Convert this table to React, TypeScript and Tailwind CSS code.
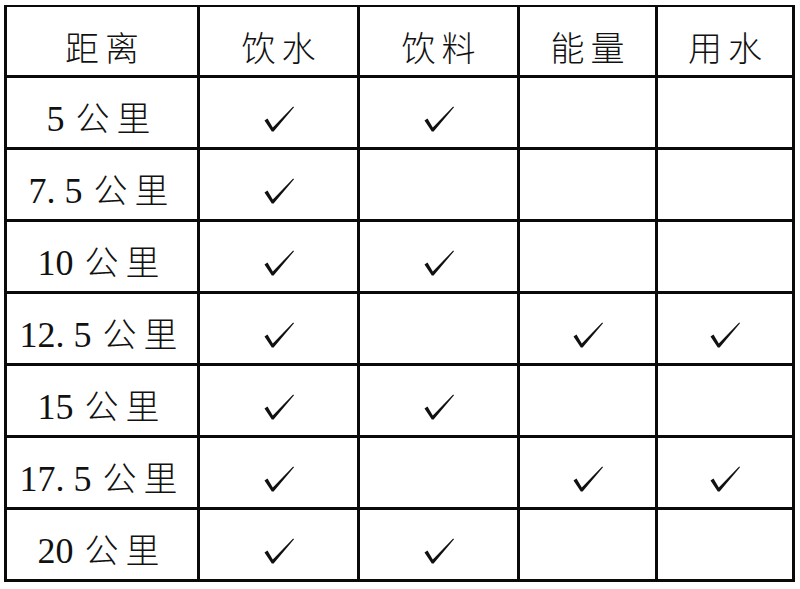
import React from 'react'

type Row = {
  num: string
  marks: boolean[] // 饮水, 饮料, 能量, 用水
}

const headers = ['距离', '饮水', '饮料', '能量', '用水']

const rows: Row[] = [
  { num: '5', marks: [true, true, false, false] },
  { num: '7. 5', marks: [true, false, false, false] },
  { num: '10', marks: [true, true, false, false] },
  { num: '12. 5', marks: [true, false, true, true] },
  { num: '15', marks: [true, true, false, false] },
  { num: '17. 5', marks: [true, false, true, true] },
  { num: '20', marks: [true, true, false, false] },
]

const cjk = "font-['Noto_Sans_CJK_SC',sans-serif] font-light"

function Check() {
  return (
    <svg width="30" height="26" viewBox="0 0 30 26" className="block">
      <path
        d="M0.5 14.5 L3.5 12.5 L8.8 21.5 L29.2 0.5 L30 1.2 L9.6 25.5 L7.8 25.5 Z"
        fill="#111"
      />
    </svg>
  )
}

function Cell({ children }: { children?: React.ReactNode }) {
  return (
    <div className="bg-white flex items-center justify-center pt-3">
      {children}
    </div>
  )
}

export default function App() {
  return (
    <div className="w-[800px] h-[589px] bg-white pt-[5px] pl-[4px]">
      <div className="inline-grid grid-cols-[190px_157px_157px_135px_134px] grid-rows-[68px_repeat(7,69px)] gap-[3px] bg-[#0a0a0a] pt-[2px] px-[3px] pb-[3px]">
        {headers.map((h) => (
          <Cell key={h}>
            <span className={`${cjk} text-[34px] leading-none tracking-[6px] pl-[6px] text-[#111]`}>
              {h}
            </span>
          </Cell>
        ))}
        {rows.map((r) => (
          <React.Fragment key={r.num}>
            <Cell>
              <span className="whitespace-pre text-[#111] leading-none">
                <span className="font-['Liberation_Serif',serif] text-[36px]">{r.num} </span>
                <span className={`${cjk} text-[34px] tracking-[7px] pl-[2px]`}>公里</span>
              </span>
            </Cell>
            {r.marks.map((m, i) => (
              <Cell key={i}>{m && <Check />}</Cell>
            ))}
          </React.Fragment>
        ))}
      </div>
    </div>
  )
}
